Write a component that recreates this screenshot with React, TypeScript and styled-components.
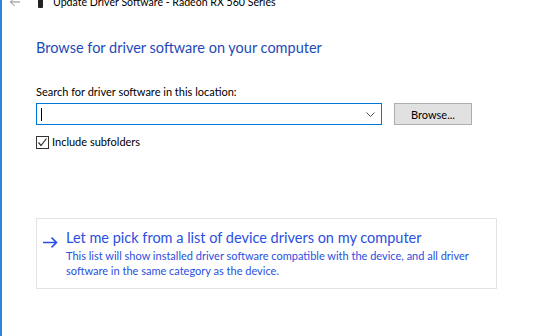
import React from "react";
import styled, { createGlobalStyle } from "styled-components";

const Global = createGlobalStyle`
  html, body { margin: 0; padding: 0; background: #fff; }
  body { font-family: Lato, "Noto Sans", sans-serif; }
  #root { width: 560px; height: 336px; overflow: hidden; }
`;

const Window = styled.div`
  width: 560px;
  height: 336px;
  box-sizing: border-box;
  border-left: 2px solid #2b87d8;
  background: #fff;
  display: flex;
  flex-direction: column;
  overflow: hidden;
`;

const TitleBar = styled.div`
  display: flex;
  align-items: center;
  height: 14px;
  margin-top: -5px;
  padding-left: 6px;
  font-size: 10.6px;
  color: #000;
`;

const BackButton = styled.div`
  width: 14px;
  display: flex;
  align-items: center;
  justify-content: center;
`;

const AppIcon = styled.div`
  width: 5px;
  height: 12px;
  background: #222;
  margin-left: 16px;
  margin-right: 10px;
  border-radius: 1px;
`;

const TitleText = styled.span`
  white-space: nowrap;
  line-height: 14px;
`;

const Content = styled.div`
  display: flex;
  flex-direction: column;
  padding-left: 34px;
  padding-top: 29px;
`;

const Heading = styled.h1`
  margin: 0;
  font-weight: normal;
  font-size: 14.5px;
  line-height: 20px;
  color: #1e4ab8;
  white-space: nowrap;
`;

const Label = styled.div`
  margin-top: 26px;
  font-size: 11px;
  line-height: 16px;
  color: #000;
`;

const Row = styled.div`
  display: flex;
  align-items: center;
  margin-top: 3px;
  gap: 12px;
`;

const Combo = styled.div`
  width: 346px;
  height: 22px;
  box-sizing: border-box;
  border: 1px solid #0078d7;
  display: flex;
  align-items: center;
  justify-content: space-between;
  padding: 0 6px 0 4px;
`;

const Caret = styled.div`
  width: 1px;
  height: 13px;
  background: #000;
`;

const Button = styled.div`
  width: 78px;
  height: 22px;
  box-sizing: border-box;
  border: 1px solid #adadad;
  background: #e1e1e1;
  font-size: 11px;
  display: flex;
  align-items: center;
  justify-content: center;
`;

const CheckRow = styled.label`
  display: flex;
  align-items: center;
  gap: 3px;
  margin-top: 9px;
  font-size: 11px;
  line-height: 16px;
`;

const Box = styled.span`
  width: 13px;
  height: 13px;
  box-sizing: border-box;
  border: 1px solid #333;
  display: flex;
  align-items: center;
  justify-content: center;
`;

const CommandLink = styled.div`
  margin-top: 68px;
  width: 461px;
  height: 71px;
  box-sizing: border-box;
  border: 1px solid #e3e3e3;
  display: flex;
  padding: 9px 0 0 6px;
  gap: 8px;
`;

const Arrow = styled.div`
  padding-top: 4px;
`;

const LinkText = styled.div`
  display: flex;
  flex-direction: column;
`;

const LinkTitle = styled.div`
  font-size: 14.5px;
  line-height: 20px;
  color: #2a4fe0;
  white-space: nowrap;
`;

const LinkDesc = styled.div`
  font-size: 11px;
  line-height: 15px;
  color: #2a4fe0;
  width: 406px;
`;

export default function App() {
  return (
    <>
      <Global />
      <Window>
        <TitleBar>
          <BackButton>
            <svg width="12" height="10" viewBox="0 0 12 10">
              <path d="M11 5H1.5M5.5 1L1.5 5l4 4" fill="none" stroke="#888" strokeWidth="1" />
            </svg>
          </BackButton>
          <AppIcon />
          <TitleText>Update Driver Software - Radeon RX 560 Series</TitleText>
        </TitleBar>
        <Content>
          <Heading>Browse for driver software on your computer</Heading>
          <Label>Search for driver software in this location:</Label>
          <Row>
            <Combo>
              <Caret />
              <svg width="9" height="5" viewBox="0 0 9 5">
                <path d="M0.5 0.5L4.5 4.5L8.5 0.5" fill="none" stroke="#555" strokeWidth="1" />
              </svg>
            </Combo>
            <Button>Browse...</Button>
          </Row>
          <CheckRow>
            <Box>
              <svg width="11" height="11" viewBox="0 0 11 11">
                <path d="M1.5 5.5L4 8.5L9.5 1.5" fill="none" stroke="#333" strokeWidth="1.2" />
              </svg>
            </Box>
            Include subfolders
          </CheckRow>
          <CommandLink>
            <Arrow>
              <svg width="15" height="11" viewBox="0 0 15 11">
                <path d="M0 5.5H13.5M8.5 0.7L13.5 5.5L8.5 10.3" fill="none" stroke="#2a4fe0" strokeWidth="1.6" />
              </svg>
            </Arrow>
            <LinkText>
              <LinkTitle>Let me pick from a list of device drivers on my computer</LinkTitle>
              <LinkDesc>
                This list will show installed driver software compatible with the device, and all driver software in the same category as the device.
              </LinkDesc>
            </LinkText>
          </CommandLink>
        </Content>
      </Window>
    </>
  );
}
